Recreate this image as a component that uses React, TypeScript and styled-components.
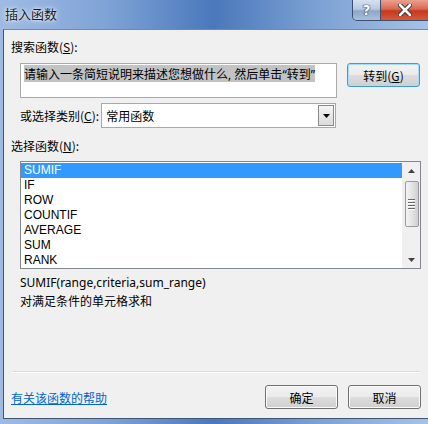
import * as React from 'react';
import styled, { createGlobalStyle } from 'styled-components';

const GlobalStyle = createGlobalStyle`
  html, body {
    margin: 0;
    padding: 0;
    width: 428px;
    height: 424px;
    overflow: hidden;
  }
  body {
    font-family: "Noto Sans CJK SC", "Noto Sans", sans-serif;
    font-size: 12px;
    color: #000;
  }
`;

const Window = styled.div`
  width: 428px;
  height: 424px;
  display: flex;
  flex-direction: column;
  background: linear-gradient(90deg, #9fbbe3 0%, #7fa3d6 25%, #4a78bb 50%, #7ea2d4 75%, #a6c2e6 100%);
  box-sizing: border-box;
`;

const TitleBar = styled.div`
  height: 29px;
  flex: none;
  display: flex;
  align-items: flex-start;
  justify-content: space-between;
`;

const Title = styled.div`
  padding: 5px 0 0 5px;
  font-size: 13px;
  line-height: 18px;
  color: #1a1a1a;
  text-shadow: 0 0 6px rgba(255, 255, 255, 0.9), 0 0 3px rgba(255, 255, 255, 0.9);
`;

const Caption = styled.div`
  display: flex;
  height: 20px;
  border: 1px solid #3c4f6e;
  border-top: none;
  border-radius: 0 0 0 5px;
  overflow: hidden;
  margin-right: -1px;
`;

const CaptionButton = styled.div<{ $red?: boolean; $w: number }>`
  width: ${(p) => p.$w}px;
  height: 20px;
  display: flex;
  align-items: center;
  justify-content: center;
  background: ${(p) =>
    p.$red
      ? 'linear-gradient(180deg, #eba08e 0%, #d86a52 45%, #c7381f 55%, #d45a3c 100%)'
      : 'linear-gradient(180deg, #d6e1f0 0%, #b8c9e0 45%, #8ea7c8 55%, #a9bfdc 100%)'};
  & + & {
    border-left: 1px solid #3c4f6e;
  }
`;

const HelpGlyph = styled.span`
  font-family: "DejaVu Sans", sans-serif;
  font-weight: bold;
  font-size: 14px;
  color: #fff;
  text-shadow: 0 0 1px #333, 0 0 1px #333, 0 0 1px #333;
  line-height: 1;
`;

const Frame = styled.div`
  flex: 1;
  display: flex;
  padding: 0 0 5px 3px;
`;

const Client = styled.div`
  flex: 1;
  background: #f0f0f0;
  border-left: 1px solid #3f5574;
  border-top: 1px solid #6f8ab0;
  border-bottom: 1px solid #3f5574;
  display: flex;
  flex-direction: column;
  padding: 9px 7px 0 7px;
  box-sizing: border-box;
`;

const Label = styled.div`
  line-height: 16px;
  white-space: nowrap;
`;

const U = styled.span`
  text-decoration: underline;
`;

const SearchRow = styled.div`
  display: flex;
  gap: 10px;
  margin: 8px 0 0 9px;
  align-items: flex-start;
`;

const SearchBox = styled.div`
  width: 317px;
  height: 35px;
  box-sizing: border-box;
  border: 1px solid #a9a9a9;
  background: #fff;
  padding: 2px 3px;
  line-height: 15px;
`;

const Selected = styled.span`
  background: #c3c3c3;
  white-space: nowrap;
`;

const Latin = styled.span`
  font-family: "Noto Sans", sans-serif;
`;

const Button = styled.div<{ $focus?: boolean }>`
  width: 73px;
  height: 24px;
  box-sizing: border-box;
  border: 1px solid ${(p) => (p.$focus ? '#3c9bdc' : '#707070')};
  border-radius: 3px;
  box-shadow: ${(p) => (p.$focus ? 'inset 0 0 0 1px #a6dbfb' : 'inset 0 0 0 1px #fbfbfb')};
  background: linear-gradient(180deg, #f2f2f2 0%, #ebebeb 48%, #dddddd 52%, #cfcfcf 100%);
  display: flex;
  align-items: center;
  justify-content: center;
  font-size: 12px;
`;

const CategoryRow = styled.div`
  display: flex;
  align-items: center;
  margin: 5px 0 0 9px;
  gap: 2px;
`;

const Select = styled.div`
  width: 235px;
  height: 25px;
  box-sizing: border-box;
  border: 1px solid #a9a9a9;
  background: #fff;
  display: flex;
  align-items: center;
  justify-content: space-between;
  padding-left: 4px;
`;

const DropButton = styled.div`
  width: 16px;
  height: 21px;
  margin-right: 1px;
  box-sizing: border-box;
  border: 1px solid #8a8a8a;
  background: linear-gradient(180deg, #f4f4f4 0%, #dcdcdc 100%);
  display: flex;
  align-items: center;
  justify-content: center;
`;

const ListLabel = styled(Label)`
  margin-top: 10px;
`;

const ListBox = styled.div`
  margin: 7px 0 0 9px;
  width: 401px;
  height: 108px;
  box-sizing: border-box;
  border: 1px solid #828790;
  background: #fff;
  display: flex;
`;

const Items = styled.div`
  flex: 1;
  padding-top: 1px;
`;

const Item = styled.div<{ $active?: boolean }>`
  height: 15px;
  line-height: 15px;
  padding-left: 3px;
  font-family: "Liberation Sans", Arial, sans-serif;
  font-size: 12px;
  background: ${(p) => (p.$active ? '#3399ff' : 'transparent')};
  color: ${(p) => (p.$active ? '#fff' : '#000')};
`;

const ScrollBar = styled.div`
  width: 17px;
  background: #f0f0f0;
  border-left: 1px solid #f0f0f0;
  display: flex;
  flex-direction: column;
  align-items: center;
`;

const Arrow = styled.div`
  height: 17px;
  width: 17px;
  display: flex;
  align-items: center;
  justify-content: center;
`;

const Thumb = styled.div`
  width: 14px;
  height: 46px;
  margin-top: 2px;
  box-sizing: border-box;
  border: 1px solid #9a9a9a;
  border-radius: 2px;
  background: linear-gradient(90deg, #f4f4f4 0%, #e4e4e4 50%, #cfcfcf 100%);
  display: flex;
  flex-direction: column;
  align-items: center;
  justify-content: center;
  gap: 2px;
`;

const Grip = styled.div`
  width: 7px;
  height: 1px;
  background: #6a6a6a;
  box-shadow: 0 1px 0 #fff;
`;

const Spacer = styled.div`
  flex: 1;
`;

const Description = styled.div`
  margin: 5px 0 0 9px;
  line-height: 18px;
`;

const Signature = styled.div`
  font-family: "Noto Sans", sans-serif;
  font-size: 12px;
`;

const Separator = styled.div`
  height: 1px;
  background: #d5dfe5;
  border-bottom: 1px solid #fff;
`;

const Footer = styled.div`
  display: flex;
  align-items: center;
  padding: 12px 0 9px 0;
  gap: 10px;
`;

const HelpLink = styled.a`
  color: #0066cc;
  text-decoration: underline;
  margin-right: auto;
  cursor: pointer;
`;

const items = ['SUMIF', 'IF', 'ROW', 'COUNTIF', 'AVERAGE', 'SUM', 'RANK'];

const App: React.FC = () => (
  <>
    <GlobalStyle />
    <Window>
      <TitleBar>
        <Title>插入函数</Title>
        <Caption>
          <CaptionButton $w={27}>
            <HelpGlyph>?</HelpGlyph>
          </CaptionButton>
          <CaptionButton $w={47} $red>
            <svg width="14" height="12" viewBox="0 0 14 12">
              <path d="M2 1 L12 11 M12 1 L2 11" stroke="#2d2d2d" strokeWidth="4.5" strokeLinecap="round" />
              <path d="M2 1 L12 11 M12 1 L2 11" stroke="#fff" strokeWidth="2.6" strokeLinecap="round" />
            </svg>
          </CaptionButton>
        </Caption>
      </TitleBar>
      <Frame>
        <Client>
          <Label>
            搜索函数(<U>S</U>):
          </Label>
          <SearchRow>
            <SearchBox>
              <Selected>
                请输入一条简短说明来描述您想做什么<Latin>, </Latin>然后单击<Latin>“</Latin>转到<Latin>”</Latin>
              </Selected>
            </SearchBox>
            <Button $focus>
              转到(<U>G</U>)
            </Button>
          </SearchRow>
          <CategoryRow>
            <Label>
              或选择类别(<U>C</U>):
            </Label>
            <Select>
              <span>常用函数</span>
              <DropButton>
                <svg width="7" height="4" viewBox="0 0 7 4">
                  <path d="M0 0 H7 L3.5 4 Z" fill="#000" />
                </svg>
              </DropButton>
            </Select>
          </CategoryRow>
          <ListLabel>
            选择函数(<U>N</U>):
          </ListLabel>
          <ListBox>
            <Items>
              {items.map((name, i) => (
                <Item key={name} $active={i === 0}>
                  {name}
                </Item>
              ))}
            </Items>
            <ScrollBar>
              <Arrow>
                <svg width="7" height="4" viewBox="0 0 7 4">
                  <path d="M0 4 H7 L3.5 0 Z" fill="#444" />
                </svg>
              </Arrow>
              <Thumb>
                <Grip />
                <Grip />
                <Grip />
                <Grip />
              </Thumb>
              <Spacer />
              <Arrow>
                <svg width="7" height="4" viewBox="0 0 7 4">
                  <path d="M0 0 H7 L3.5 4 Z" fill="#444" />
                </svg>
              </Arrow>
            </ScrollBar>
          </ListBox>
          <Description>
            <Signature>SUMIF(range,criteria,sum_range)</Signature>
            <div>对满足条件的单元格求和</div>
          </Description>
          <Spacer />
          <Separator />
          <Footer>
            <HelpLink>有关该函数的帮助</HelpLink>
            <Button>确定</Button>
            <Button>取消</Button>
          </Footer>
        </Client>
      </Frame>
    </Window>
  </>
);

export default App;
